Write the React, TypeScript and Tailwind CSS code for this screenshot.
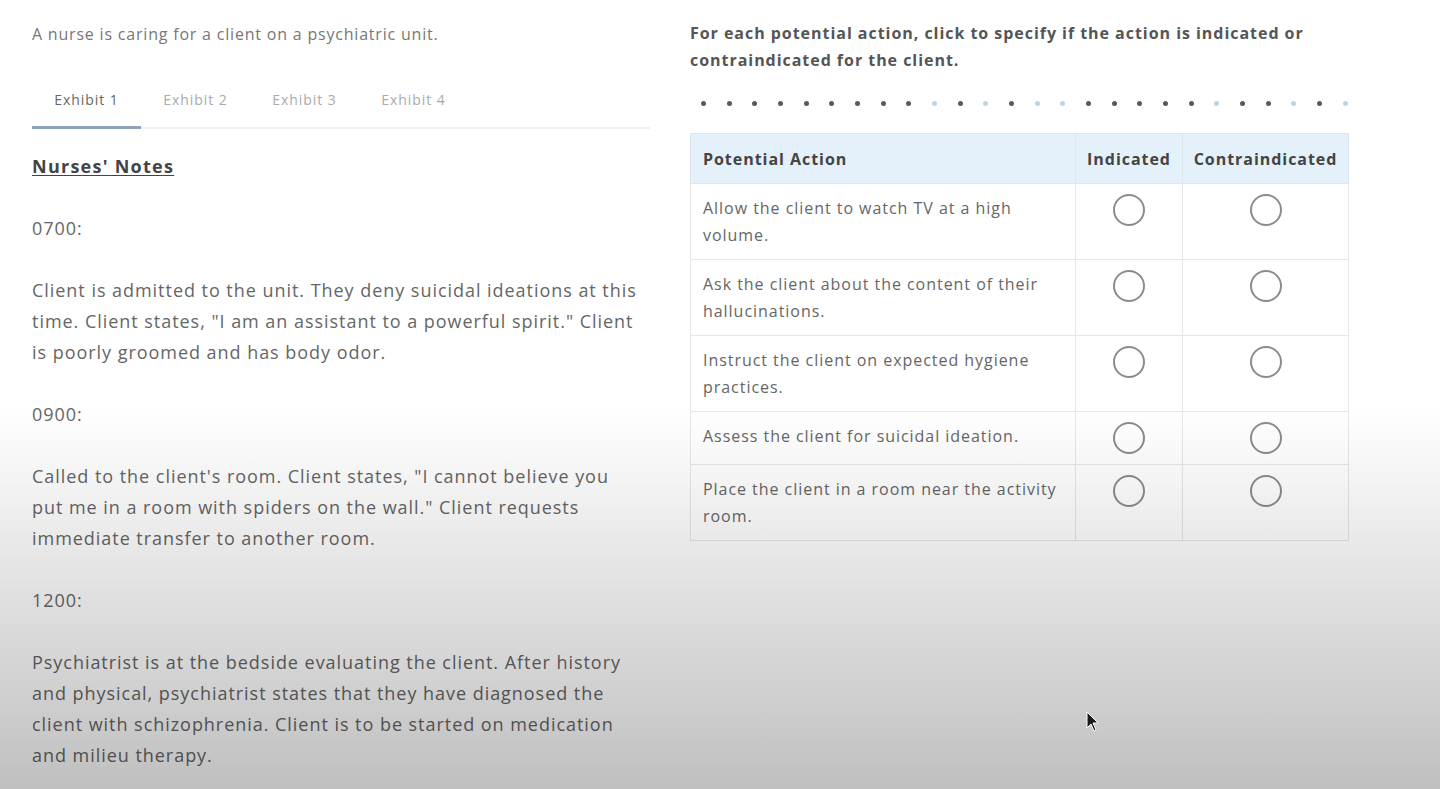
const exhibits = ["Exhibit 1", "Exhibit 2", "Exhibit 3", "Exhibit 4"];

const notes: { time: string; text: string }[] = [
  {
    time: "0700:",
    text: 'Client is admitted to the unit. They deny suicidal ideations at this time. Client states, "I am an assistant to a powerful spirit." Client is poorly groomed and has body odor.',
  },
  {
    time: "0900:",
    text: 'Called to the client\'s room. Client states, "I cannot believe you put me in a room with spiders on the wall." Client requests immediate transfer to another room.',
  },
  {
    time: "1200:",
    text: "Psychiatrist is at the bedside evaluating the client. After history and physical, psychiatrist states that they have diagnosed the client with schizophrenia. Client is to be started on medication and milieu therapy.",
  },
];

const actions = [
  "Allow the client to watch TV at a high volume.",
  "Ask the client about the content of their hallucinations.",
  "Instruct the client on expected hygiene practices.",
  "Assess the client for suicidal ideation.",
  "Place the client in a room near the activity room.",
];

// light dots mark the answered / visited steps
const dots = "dddddddddldldlldddddlddldld".split("").slice(0, 26);

export default function App() {
  return (
    <div className="relative h-[789px] w-full overflow-hidden bg-white font-['Open_Sans',sans-serif] tracking-[0.06em]">
      <div className="flex gap-10 pl-8">
        <LeftPanel />
        <RightPanel />
      </div>
      <div className="pointer-events-none absolute inset-0 bg-linear-to-b from-transparent from-[52%] to-black/25" />
      <svg
        className="pointer-events-none absolute left-[1085px] top-[711px]"
        width="14"
        height="22"
        viewBox="0 0 14 22"
      >
        <path d="M2 1 L2 17 L6 13 L9 20 L11 19 L8 12 L13 12 Z" fill="#1a1a1a" stroke="#fff" strokeWidth="1" />
      </svg>
    </div>
  );
}

function LeftPanel() {
  return (
    <div className="w-[618px] shrink-0">
      <p className="mt-[23px] text-[16px] leading-[22px] tracking-[0.05em] text-[#777]">
        A nurse is caring for a client on a psychiatric unit.
      </p>
      <div className="mt-[25px] flex border-b-2 border-[#f0f0f0]">
        {exhibits.map((label, i) => (
          <div
            key={label}
            className={
              i === 0
                ? "-mb-[2px] flex h-[59px] w-[109px] items-center justify-center border-b-[3px] border-[#8ea3bd] pt-[2px] text-[14px] text-[#666]"
                : "flex h-[57px] w-[109px] items-center justify-center pt-[2px] text-[14px] text-[#aaa]"
            }
          >
            {label}
          </div>
        ))}
      </div>
      <div className="mt-[22px] max-w-[608px] text-[18px] leading-[31px] text-[#666]">
        <h3 className="mb-[31px] text-[18px] font-bold tracking-[0.07em] text-[#444] underline underline-offset-2">
          Nurses&#39; Notes
        </h3>
        {notes.map((n) => (
          <div key={n.time}>
            <p className="mb-[31px]">{n.time}</p>
            <p className="mb-[31px]">{n.text}</p>
          </div>
        ))}
      </div>
    </div>
  );
}

function RightPanel() {
  return (
    <div className="w-[659px] shrink-0">
      <p className="mt-[20px] text-[16px] font-bold leading-[27px] text-[#555]">
        For each potential action, click to specify if the action is indicated or contraindicated for the client.
      </p>
      <div className="mt-[26px] flex h-[6px] items-center justify-between pl-[11px] pr-[1px]">
        {dots.map((d, i) => (
          <span
            key={i}
            className={d === "d" ? "h-[5px] w-[5px] rounded-full bg-[#5a5a5a]" : "h-[5px] w-[5px] rounded-full bg-[#b9d6e2]"}
          />
        ))}
      </div>
      <table className="mt-[27px] w-[659px] border-collapse text-[16px] text-[#666]">
        <thead>
          <tr className="h-[50px] bg-[#e4f1fb] text-[#444]">
            <th className="w-[385px] border border-[#dde6ee] px-3 text-left font-bold">Potential Action</th>
            <th className="w-[107px] border border-[#dde6ee] px-1 text-center font-bold">Indicated</th>
            <th className="border border-[#dde6ee] px-1 text-center font-bold">Contraindicated</th>
          </tr>
        </thead>
        <tbody>
          {actions.map((a) => (
            <tr key={a}>
              <td className="border border-[#e6e6e6] px-3 pb-[10px] pt-[11px] align-top leading-[27px]">{a}</td>
              <td className="border border-[#e6e6e6] pb-[10px] pt-[10px] align-top">
                <Radio />
              </td>
              <td className="border border-[#e6e6e6] pb-[10px] pt-[10px] align-top">
                <Radio />
              </td>
            </tr>
          ))}
        </tbody>
      </table>
    </div>
  );
}

function Radio() {
  return <div className="mx-auto h-[32px] w-[32px] rounded-full border-[2.5px] border-[#8c8c8c]" />;
}
